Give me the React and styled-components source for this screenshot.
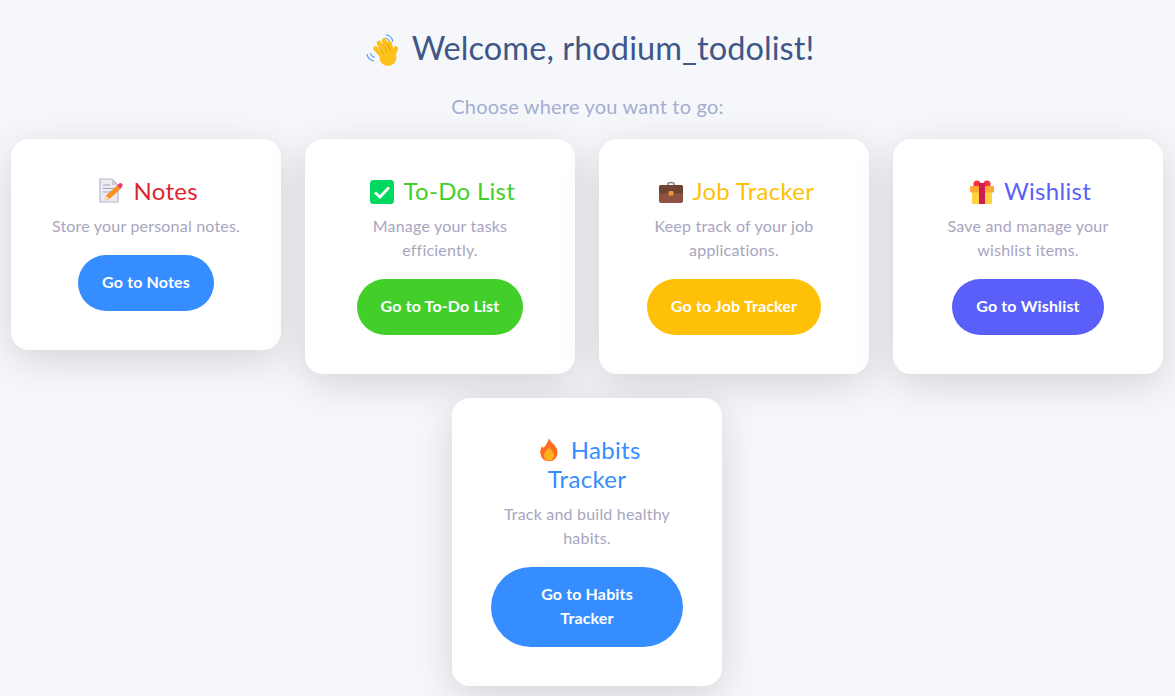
import React from "react";
import styled, { createGlobalStyle } from "styled-components";

const GlobalStyle = createGlobalStyle`
  * { box-sizing: border-box; }
  html, body { margin: 0; padding: 0; background: #f5f7fb; }
  body { font-family: "Lato", "Noto Sans", sans-serif; }
`;

const WaveIcon = () => (
  <svg viewBox="0 0 34 34" width="34" height="34">
    <path d="M19 4c2 .2 4 2 4.500 4.500M20 .8c3.500.3 6.300 3.200 6.800 6.800" fill="none" stroke="#5c9dff" strokeWidth="1.200" />
    <path d="M4.500 19c.3 2 2 3.800 4.200 4.300M1 20c.5 3.500 3.300 6.300 6.800 6.800" fill="none" stroke="#5c9dff" strokeWidth="1.200" />
    <g stroke="#fcc21b" strokeWidth="4.600" strokeLinecap="round">
      <path d="M9.500 14.500 17 23" />
      <path d="M13 9 20 21" />
      <path d="M18 6.500 24 20" />
      <path d="M23.500 9 26 20" />
      <path d="M30 14.500 26 24" />
    </g>
    <circle cx="22" cy="23.500" r="8.500" fill="#fcc21b" />
    <path d="M12.500 13 18 20M16.500 9.500 21 18M21.500 9.500 24 17" fill="none" stroke="#e59600" strokeWidth=".8" />
  </svg>
);

const MemoIcon = () => (
  <svg viewBox="0 0 24 26" width="24" height="26">
    <path d="M1 1h12l6 6v17H1z" fill="#eceaf2" stroke="#b9b3c9" strokeWidth="1.200" />
    <path d="M13 1v6h6z" fill="#cfcbdb" />
    <path d="M4 7h7M4 10.500h11M4 14h8" stroke="#a9a3bb" strokeWidth="1.200" />
    <path d="M5.500 22.500 7 17.500 18 7.500 21.500 11 10.500 21z" fill="#f79329" />
    <path d="M5.500 22.500 7 17.500 10.500 21z" fill="#fbd9a8" />
    <path d="M18 7.500l2-1.800a1.800 1.800 0 0 1 3 3L21.500 11z" fill="#f0386b" />
  </svg>
);

const CheckIcon = () => (
  <svg viewBox="0 0 24 24" width="24" height="24">
    <rect width="24" height="24" rx="3.500" fill="#00d95f" />
    <path d="M5 12.500 10 17 19 7.500" fill="none" stroke="#fff" strokeWidth="2.800" />
  </svg>
);

const BriefcaseIcon = () => (
  <svg viewBox="0 0 24 24" width="24" height="24">
    <path d="M9 6V3.500c0-1.500 6-1.500 6 0V6" fill="none" stroke="#8d7a72" strokeWidth="1.500" />
    <rect x="0" y="5" width="24" height="18" rx="2" fill="#8d5240" />
    <path d="M0 7a2 2 0 0 1 2-2h20a2 2 0 0 1 2 2v6.500H0z" fill="#6d4434" />
    <rect x="9.500" y="11" width="5" height="4.500" rx="1" fill="#e8963a" />
  </svg>
);

const GiftIcon = () => (
  <svg viewBox="0 0 24 24" width="24" height="24">
    <circle cx="7" cy="4" r="3.600" fill="#f4333d" />
    <circle cx="17" cy="4" r="3.600" fill="#f4333d" />
    <rect x="2" y="10" width="20" height="14" rx="1" fill="#ffd23f" />
    <rect x="0" y="6" width="24" height="6.500" rx="1" fill="#ffa935" />
    <rect x="9" y="3" width="6" height="21" fill="#d01c50" />
  </svg>
);

const FireIcon = () => (
  <svg viewBox="0 0 22 26" width="22" height="26">
    <path d="M11 1c1 4 4 5 6.500 8.500 3 4.500 2.500 9-.5 12.500-3 3-9 3-12 0-3-3.500-3.500-8-1.500-11.500 1-1.500 1.500-1 2 .5C8 8 10 5 11 1z" fill="#ff6d1f" />
    <path d="M11 10c1.500 2.500 5 4.500 5 8.500 0 3-2.500 5-5 5s-5-2-5-5c0-3.500 3.500-5 5-8.500z" fill="#fdb022" />
  </svg>
);

const cards = [
  { id: "notes", title: "Notes", icon: <MemoIcon />, color: "#e0242f", bg: "#368dff", desc: "Store your personal notes.", label: "Go to Notes" },
  { id: "todo", title: "To-Do List", icon: <CheckIcon />, color: "#43cf2a", bg: "#43cf2a", desc: "Manage your tasks efficiently.", label: "Go to To-Do List" },
  { id: "jobs", title: "Job Tracker", icon: <BriefcaseIcon />, color: "#ffc107", bg: "#ffc107", desc: "Keep track of your job applications.", label: "Go to Job Tracker" },
  { id: "wishlist", title: "Wishlist", icon: <GiftIcon />, color: "#5b5ff9", bg: "#5b5ff9", desc: "Save and manage your wishlist items.", label: "Go to Wishlist" },
  { id: "habits", title: <>Habits<br />Tracker</>, icon: <FireIcon />, color: "#368dff", bg: "#368dff", desc: "Track and build healthy habits.", label: "Go to Habits Tracker" },
];

export default function App() {
  return (
    <Page>
      <GlobalStyle />
      <Heading><WaveIcon /> Welcome, rhodium_todolist!</Heading>
      <Subtitle>Choose where you want to go:</Subtitle>
      <CardGrid>
        {cards.map(card => (
          <Card key={card.id}>
            <CardTitle $color={card.color}>{card.icon} {card.title}</CardTitle>
            <CardText>{card.desc}</CardText>
            <CardButton $bg={card.bg}>{card.label}</CardButton>
          </Card>
        ))}
      </CardGrid>
    </Page>
  );
}

const Page = styled.div`
  min-height: 696px;
  padding-top: 27px;
  text-align: center;
  background: #f5f7fb;
`;

const Heading = styled.h1`
  margin: 0 0 24px;
  font-size: 32.5px;
  line-height: 42px;
  font-weight: 400;
  letter-spacing: 0.08px;
  color: #3f5788;
  svg {
    vertical-align: -8px;
    margin: 0 4px 0 5px;
  }
`;

const Subtitle = styled.p`
  margin: 0 0 20px;
  font-size: 20px;
  line-height: 26px;
  letter-spacing: 0.2px;
  color: #a3aed0;
`;

const CardGrid = styled.div`
  display: flex;
  flex-wrap: wrap;
  justify-content: center;
  align-items: flex-start;
  gap: 24px;
  padding-right: 1px;
`;

const Card = styled.div`
  width: 270px;
  padding: 37px 39px 39px;
  background: #fff;
  border-radius: 18px;
  box-shadow: 0 10px 40px rgba(0, 0, 0, 0.14);
`;

const CardTitle = styled.h2`
  margin: 0 0 9px;
  font-size: 24px;
  line-height: 29px;
  font-weight: 400;
  letter-spacing: 0.3px;
  color: ${p => p.$color};
  svg {
    vertical-align: -4px;
    margin: 0 4px 0 5px;
  }
`;

const CardText = styled.p`
  margin: 0 0 17px;
  font-size: 16px;
  line-height: 24px;
  letter-spacing: 0.2px;
  color: #a8a5c0;
`;

const CardButton = styled.button`
  padding: 15px 24px 17px;
  border: none;
  border-radius: 40px;
  background: ${p => p.$bg};
  color: #fff;
  font-family: inherit;
  font-size: 16px;
  line-height: 24px;
  font-weight: 700;
  letter-spacing: 0.15px;
`;
